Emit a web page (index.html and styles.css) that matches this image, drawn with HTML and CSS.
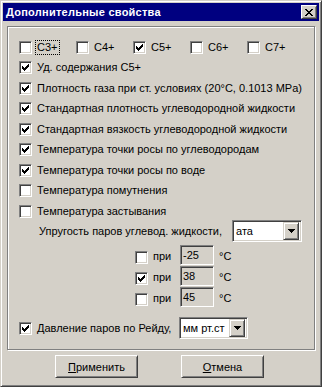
FILE: index.html
```html
<!DOCTYPE html>
<html lang="ru">
<head>
    <meta charset="UTF-8">
    <title>Дополнительные свойства</title>
    <link rel="stylesheet" href="styles.css">
</head>
<body>
    <div class="window">
        <!-- Заголовок окна -->
        <div class="titlebar">
            <span class="title">Дополнительные свойства</span>
            <span class="close-btn">
                <svg width="8" height="7" viewBox="0 0 8 7"><path d="M0 0h2v1H0zM6 0h2v1H6zM1 1h2v1H1zM5 1h2v1H5zM2 2h4v1H2zM3 3h2v1H3zM2 4h4v1H2zM1 5h2v1H1zM5 5h2v1H5zM0 6h2v1H0zM6 6h2v1H6z" fill="#000"/></svg>
            </span>
        </div>

        <div class="client">
            <div class="group">
                <!-- Фракции -->
                <div class="row fractions">
                    <div class="choice"><span class="box"></span><span class="label focus">C3+</span></div>
                    <div class="choice"><span class="box"></span><span class="label">C4+</span></div>
                    <div class="choice"><span class="box checked"></span><span class="label">C5+</span></div>
                    <div class="choice"><span class="box"></span><span class="label">C6+</span></div>
                    <div class="choice"><span class="box"></span><span class="label">C7+</span></div>
                </div>

                <div class="row"><span class="box checked"></span><span class="label">Уд. содержания C5+</span></div>
                <div class="row"><span class="box checked"></span><span class="label">Плотность газа при ст. условиях (20°C, 0.1013 MPa)</span></div>
                <div class="row"><span class="box checked"></span><span class="label">Стандартная плотность углеводородной жидкости</span></div>
                <div class="row"><span class="box checked"></span><span class="label">Стандартная вязкость углеводородной жидкости</span></div>
                <div class="row"><span class="box checked"></span><span class="label">Температура точки росы по углеводородам</span></div>
                <div class="row"><span class="box checked"></span><span class="label">Температура точки росы по воде</span></div>
                <div class="row"><span class="box"></span><span class="label">Температура помутнения</span></div>
                <div class="row"><span class="box"></span><span class="label">Температура застывания</span></div>

                <!-- Упругость паров -->
                <div class="pressure-row">
                    <span class="pressure-label">Упругость паров углевод. жидкости,</span>
                    <div class="combo combo-ata">
                        <span class="combo-value">ата</span>
                        <span class="combo-btn"><svg width="7" height="4" viewBox="0 0 7 4"><path d="M0 0h7v1H0zM1 1h5v1H1zM2 2h3v1H2zM3 3h1v1H3z" fill="#000"/></svg></span>
                    </div>
                </div>

                <div class="temp-list">
                    <div class="temp-row">
                        <span class="box"></span>
                        <span class="temp-label">при</span>
                        <span class="edit">-25</span>
                        <span class="unit">°C</span>
                    </div>
                    <div class="temp-row">
                        <span class="box checked"></span>
                        <span class="temp-label">при</span>
                        <span class="edit">38</span>
                        <span class="unit">°C</span>
                    </div>
                    <div class="temp-row">
                        <span class="box"></span>
                        <span class="temp-label">при</span>
                        <span class="edit">45</span>
                        <span class="unit">°C</span>
                    </div>
                </div>

                <!-- Давление по Рейду -->
                <div class="reid-row">
                    <span class="box checked"></span>
                    <span class="label reid-label">Давление паров по Рейду,</span>
                    <div class="combo combo-reid">
                        <span class="combo-value">мм рт.ст</span>
                        <span class="combo-btn"><svg width="7" height="4" viewBox="0 0 7 4"><path d="M0 0h7v1H0zM1 1h5v1H1zM2 2h3v1H2zM3 3h1v1H3z" fill="#000"/></svg></span>
                    </div>
                </div>
            </div>

            <div class="buttons">
                <button class="btn"><u>П</u>рименить</button>
                <button class="btn"><u>О</u>тмена</button>
            </div>
        </div>
    </div>

    <script>
        // галочки рисуем одним шаблоном
        const checkSvg = '<svg width="7" height="7" viewBox="0 0 7 7"><path d="M0 2h1v3H0zM1 3h1v3H1zM2 4h1v3H2zM3 3h1v3H3zM4 2h1v3H4zM5 1h1v3H5zM6 0h1v3H6z" fill="#000"/></svg>';
        document.querySelectorAll('.box.checked').forEach(box => {
            box.innerHTML = checkSvg;
        });
    </script>
</body>
</html>
```

FILE: styles.css
```css
* {
    box-sizing: border-box;
}
body {
    margin: 0;
    background-color: #d4d0c8;
    font-family: "Liberation Sans", Arial, sans-serif;
    font-size: 11px;
    color: #000;
}
.window {
    width: 322px;
    height: 387px;
    padding: 2px;
    background-color: #d4d0c8;
    border: 1px solid;
    border-color: #d4d0c8 #404040 #404040 #d4d0c8;
    box-shadow: inset 1px 1px #fff, inset -1px -1px #808080;
    display: flex;
    flex-direction: column;
}
.titlebar {
    height: 18px;
    margin-bottom: 1px;
    padding: 0 2px 0 3px;
    background-color: #000080;
    display: flex;
    align-items: center;
    justify-content: space-between;
}
.title {
    color: #fff;
    font-weight: bold;
    font-size: 11px;
    letter-spacing: 0.25px;
}
.close-btn {
    width: 16px;
    height: 14px;
    background-color: #d4d0c8;
    border: 1px solid;
    border-color: #fff #404040 #404040 #fff;
    box-shadow: inset 1px 1px #d4d0c8, inset -1px -1px #808080;
    display: flex;
    align-items: center;
    justify-content: center;
}
.close-btn svg {
    display: block;
}
.client {
    display: flex;
    flex-direction: column;
}
.group {
    width: 308px;
    height: 324px;
    margin: 4px 4px 0 4px;
    padding: 10px 0 0 11px;
    border: 1px solid #808080;
    box-shadow: inset 1px 1px #fff, 1px 1px #fff;
}
.row {
    height: 20.5px;
    display: flex;
    align-items: center;
}
.choice {
    width: 57px;
    display: flex;
    align-items: center;
}
.box {
    width: 13px;
    height: 13px;
    padding: 2px;
    flex-shrink: 0;
    background-color: #fff;
    border: 1px solid;
    border-color: #808080 #fff #fff #808080;
    box-shadow: inset 1px 1px #404040, inset -1px -1px #d4d0c8;
}
.box svg {
    display: block;
}
.label {
    margin-left: 3px;
    padding: 0 1px;
    line-height: 13px;
    border: 1px dotted transparent;
    white-space: nowrap;
}
.label.focus {
    border-color: #000;
}
.pressure-row {
    height: 22px;
    margin-top: -1.5px;
    padding-left: 20px;
    display: flex;
    align-items: center;
}
.pressure-label {
    width: 193px;
    white-space: nowrap;
}
.combo {
    height: 22px;
    padding: 2px;
    background-color: #fff;
    border: 1px solid;
    border-color: #808080 #fff #fff #808080;
    box-shadow: inset 1px 1px #404040, inset -1px -1px #d4d0c8;
    display: flex;
    align-items: center;
}
.combo-ata {
    width: 70px;
}
.combo-reid {
    width: 69px;
}
.combo-value {
    flex: 1;
    padding-left: 1px;
    white-space: nowrap;
    overflow: hidden;
}
.combo-btn {
    width: 16px;
    height: 18px;
    flex-shrink: 0;
    background-color: #d4d0c8;
    border: 1px solid;
    border-color: #d4d0c8 #404040 #404040 #d4d0c8;
    box-shadow: inset 1px 1px #fff, inset -1px -1px #808080;
    display: flex;
    align-items: center;
    justify-content: center;
}
.combo-btn svg {
    display: block;
}
.temp-list {
    margin-top: 3px;
    padding-left: 116px;
}
.temp-row {
    height: 21px;
    display: flex;
    align-items: flex-start;
}
.temp-row .box {
    margin-top: 6px;
}
.temp-label {
    width: 32px;
    margin-top: 5px;
    padding-left: 5px;
    line-height: 13px;
}
.edit {
    width: 34px;
    height: 20px;
    padding: 1px 0 0 2px;
    line-height: 16px;
    background-color: #d4d0c8;
    border: 1px solid;
    border-color: #808080 #fff #fff #808080;
    box-shadow: inset 1px 1px #404040, inset -1px -1px #d4d0c8;
}
.unit {
    margin-top: 5px;
    margin-left: 5px;
    line-height: 13px;
}
.reid-row {
    height: 22px;
    margin-top: 9px;
    display: flex;
    align-items: center;
}
.reid-label {
    width: 144px;
}
.buttons {
    margin-top: 5px;
    padding-left: 52px;
    display: flex;
    gap: 43px;
}
.btn {
    width: 83px;
    height: 23px;
    padding: 0;
    font: inherit;
    color: #000;
    background-color: #d4d0c8;
    border: 1px solid;
    border-color: #fff #404040 #404040 #fff;
    box-shadow: inset 1px 1px #d4d0c8, inset -1px -1px #808080;
}
```
